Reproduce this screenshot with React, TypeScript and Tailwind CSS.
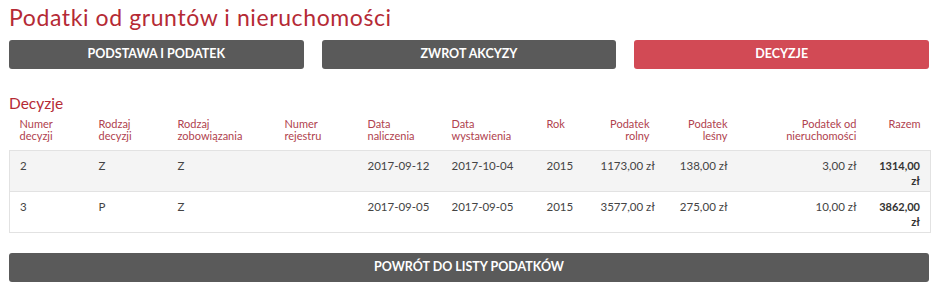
import React from "react";

const cols = [
  { h: ["Numer", "decyzji"], w: 79, right: false },
  { h: ["Rodzaj", "decyzji"], w: 79, right: false },
  { h: ["Rodzaj", "zobowiązania"], w: 107, right: false },
  { h: ["Numer", "rejestru"], w: 83, right: false },
  { h: ["Data", "naliczenia"], w: 84, right: false },
  { h: ["Data", "wystawienia"], w: 95, right: false },
  { h: ["Rok"], w: 54, right: false },
  { h: ["Podatek", "rolny"], w: 69, right: true },
  { h: ["Podatek", "leśny"], w: 78, right: true },
  { h: ["Podatek od", "nieruchomości"], w: 129, right: true },
  { h: ["Razem"], w: 64, right: true },
];

const rows = [
  ["2", "Z", "Z", "", "2017-09-12", "2017-10-04", "2015", "1173,00 zł", "138,00 zł", "3,00 zł", "1314,00 zł"],
  ["3", "P", "Z", "", "2017-09-05", "2017-09-05", "2015", "3577,00 zł", "275,00 zł", "10,00 zł", "3862,00 zł"],
];

export default function App() {
  return (
    <div
      className="w-[938px] h-[293px] bg-white px-[9px] pt-[2px] text-[#444]"
      style={{ fontFamily: "Lato, 'Open Sans', sans-serif" }}
    >
      <h1 className="text-[23px] leading-[30px] tracking-[0.6px] text-[#b52a35] font-normal">
        Podatki od gruntów i nieruchomości
      </h1>
      <div className="mt-[8px] grid grid-cols-3 gap-[18px]">
        <div className="h-[29px] rounded-[3px] bg-[#5a5a5a] text-white font-bold text-[12.5px] flex items-center justify-center">
          PODSTAWA I PODATEK
        </div>
        <div className="h-[29px] rounded-[3px] bg-[#5a5a5a] text-white font-bold text-[12.5px] flex items-center justify-center">
          ZWROT AKCYZY
        </div>
        <div className="h-[29px] rounded-[3px] bg-[#d24a55] text-white font-bold text-[12.5px] flex items-center justify-center">
          DECYZJE
        </div>
      </div>
      <h2 className="mt-[25px] text-[15.5px] leading-[18px] text-[#b52a35] font-normal">Decyzje</h2>
      <table className="table-fixed border-collapse w-[921px]">
        <colgroup>
          {cols.map((c, i) => (
            <col key={i} style={{ width: c.w }} />
          ))}
        </colgroup>
        <thead>
          <tr>
            {cols.map((c, i) => (
              <th
                key={i}
                className={`px-[10px] pt-[6px] pb-[8px] align-top text-[11px] leading-[12px] font-normal text-[#b0424e] whitespace-nowrap ${
                  c.right ? "text-right" : "text-left"
                }`}
              >
                {c.h.map((l, j) => (
                  <div key={j}>{l}</div>
                ))}
              </th>
            ))}
          </tr>
        </thead>
        <tbody>
          {rows.map((r, ri) => (
            <tr
              key={ri}
              className={`h-[40px] border border-[#e2e2e2] ${ri === 0 ? "bg-[#f4f4f4]" : "bg-white"}`}
            >
              {r.map((v, ci) => (
                <td
                  key={ci}
                  className={`px-[10px] pt-[7px] pb-[3px] align-top leading-[15px] ${
                    cols[ci].right ? "text-right" : "text-left"
                  } ${ci === 10 ? "font-bold text-[#333] text-[11px]" : "text-[11.5px] whitespace-nowrap"}`}
                >
                  {v}
                </td>
              ))}
            </tr>
          ))}
        </tbody>
      </table>
      <div className="mt-[20px] h-[29px] rounded-[3px] bg-[#5a5a5a] text-white font-bold text-[12.5px] flex items-center justify-center">
        POWRÓT DO LISTY PODATKÓW
      </div>
    </div>
  );
}
